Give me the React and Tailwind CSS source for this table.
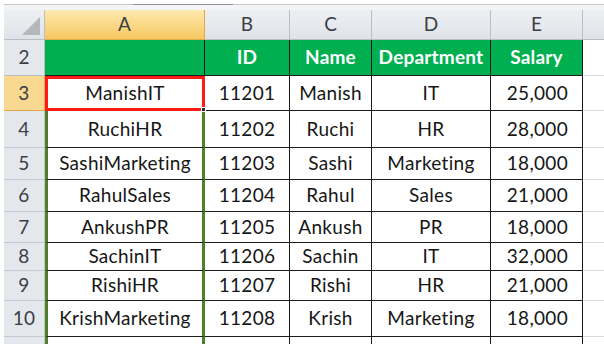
import React from "react";

const rows = [
  { n: 3, h: "h-[35px]", a: "ManishIT", id: "11201", name: "Manish", dept: "IT", sal: "25,000" },
  { n: 4, h: "h-[37px]", a: "RuchiHR", id: "11202", name: "Ruchi", dept: "HR", sal: "28,000" },
  { n: 5, h: "h-[32px]", a: "SashiMarketing", id: "11203", name: "Sashi", dept: "Marketing", sal: "18,000" },
  { n: 6, h: "h-[32px]", a: "RahulSales", id: "11204", name: "Rahul", dept: "Sales", sal: "21,000" },
  { n: 7, h: "h-[31px]", a: "AnkushPR", id: "11205", name: "Ankush", dept: "PR", sal: "18,000" },
  { n: 8, h: "h-[28px]", a: "SachinIT", id: "11206", name: "Sachin", dept: "IT", sal: "32,000" },
  { n: 9, h: "h-[30px]", a: "RishiHR", id: "11207", name: "Rishi", dept: "HR", sal: "21,000" },
  { n: 10, h: "h-[36px]", a: "KrishMarketing", id: "11208", name: "Krish", dept: "Marketing", sal: "18,000" },
];

const font = { fontFamily: "Lato, 'Open Sans', sans-serif" };

export default function App() {
  return (
    <div className="w-[604px] h-[344px] overflow-hidden bg-white pl-[4px] text-[#161616]" style={font}>
      <div className="h-[4px] bg-white" />
      <div className="h-px bg-[#c4c7cb] flex">
        <div className="ml-[129px] w-[100px] h-px bg-[#8f9399]" />
      </div>
      <div className="h-[5px] bg-[#f3f4f6]" />
      {/* column header row */}
      <div className="flex h-[30px] text-[19px] text-[#3b3f45]">
        <div className="w-[41px] bg-gradient-to-b from-[#eef0f3] to-[#dfe3e8] border-r border-b border-[#b8bec6] flex items-end justify-end pr-[4px] pb-[4px]">
          <svg width="18" height="18" viewBox="0 0 18 18">
            <polygon points="18,0 18,18 0,18" fill="#b4b8bd" />
          </svg>
        </div>
        <div className="w-[160px] bg-gradient-to-b from-[#fde9ad] to-[#f6c85e] border-r border-b border-[#e2a84a] flex items-center justify-center">A</div>
        <div className="w-[85px] bg-gradient-to-b from-[#eef0f3] to-[#dfe3e8] border-r border-b border-[#b8bec6] flex items-center justify-center">B</div>
        <div className="w-[82px] bg-gradient-to-b from-[#eef0f3] to-[#dfe3e8] border-r border-b border-[#b8bec6] flex items-center justify-center">C</div>
        <div className="w-[119px] bg-gradient-to-b from-[#eef0f3] to-[#dfe3e8] border-r border-b border-[#b8bec6] flex items-center justify-center">D</div>
        <div className="w-[92px] bg-gradient-to-b from-[#eef0f3] to-[#dfe3e8] border-r border-b border-[#b8bec6] flex items-center justify-center">E</div>
        <div className="flex-1 bg-gradient-to-b from-[#eef0f3] to-[#dfe3e8] border-b border-[#b8bec6]" />
      </div>
      {/* row 2 header row */}
      <div className="flex h-[36px] text-[19px] tracking-[0.2px]">
        <div className="w-[41px] bg-[#e4e8ed] border-r border-b border-[#b8bec6] flex items-center justify-center text-[#3b3f45]">2</div>
        <div className="w-[160px] bg-[#00b050] border-r border-b border-[#1a1a1a]" />
        <div className="w-[85px] bg-[#00b050] border-r border-b border-[#1a1a1a] flex items-center justify-center text-white font-bold">ID</div>
        <div className="w-[82px] bg-[#00b050] border-r border-b border-[#1a1a1a] flex items-center justify-center text-white font-bold">Name</div>
        <div className="w-[119px] bg-[#00b050] border-r border-b border-[#1a1a1a] flex items-center justify-center text-white font-bold">Department</div>
        <div className="w-[92px] bg-[#00b050] border-r border-b border-[#1a1a1a] flex items-center justify-center text-white font-bold">Salary</div>
        <div className="flex-1 border-b border-[#dadcdf]" />
      </div>
      {rows.map((r) => {
        const sel = r.n === 3;
        return (
          <div key={r.n} className={`flex ${r.h} text-[19px] tracking-[0.3px]`}>
            <div
              className={
                sel
                  ? "w-[41px] bg-[#f9d891] border-r border-b border-[#e2a84a] flex items-center justify-center text-[#3b3f45]"
                  : "w-[41px] bg-[#e4e8ed] border-r border-b border-[#c3c9d0] flex items-center justify-center text-[#3b3f45]"
              }
            >
              {r.n}
            </div>
            {sel ? (
              <div className="relative w-[160px] border-[3px] border-[#ff1a1a] flex items-center justify-center">
                {r.a}
                <div className="absolute -right-[4px] -bottom-[4px] w-[5px] h-[5px] bg-[#2a2a2a] border border-white" />
              </div>
            ) : (
              <div className="w-[160px] border-x-[3px] border-x-[#4f7f27] border-b border-b-[#1a1a1a] flex items-center justify-center">
                {r.a}
              </div>
            )}
            <div className="w-[85px] border-r border-b border-[#1a1a1a] flex items-center justify-center">{r.id}</div>
            <div className="w-[82px] border-r border-b border-[#1a1a1a] flex items-center justify-center">{r.name}</div>
            <div className="w-[119px] border-r border-b border-[#1a1a1a] flex items-center justify-center">{r.dept}</div>
            <div className="w-[92px] border-r border-b border-[#1a1a1a] flex items-center justify-end pr-[14px]">{r.sal}</div>
            <div className="flex-1 border-b border-[#dadcdf]" />
          </div>
        );
      })}
      <div className="flex h-[20px]">
        <div className="w-[41px] bg-[#e4e8ed] border-r border-[#c3c9d0]" />
        <div className="w-[160px] border-x-[3px] border-x-[#4f7f27]" />
        <div className="w-[85px] border-r border-[#1a1a1a]" />
        <div className="w-[82px] border-r border-[#1a1a1a]" />
        <div className="w-[119px] border-r border-[#1a1a1a]" />
        <div className="w-[92px] border-r border-[#1a1a1a]" />
        <div className="flex-1" />
      </div>
    </div>
  );
}
